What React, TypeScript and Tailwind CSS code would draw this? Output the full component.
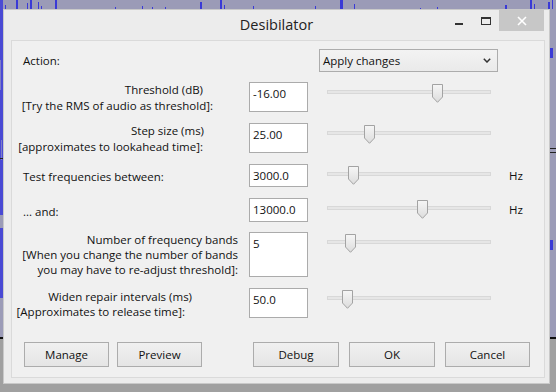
import React from "react";

const font = { fontFamily: '"Open Sans", "Noto Sans", sans-serif' };

// [x, height] of waveform peaks poking above the dialog
const peaks: [number, number, number][] = [
  [5, 4, 1], [16, 9, 2], [27, 6, 1], [30, 9, 2], [38, 7, 1], [41, 3, 1], [55, 9, 2],
  [115, 2, 1], [142, 3, 1], [152, 2, 1], [165, 2, 1], [200, 7, 2], [220, 9, 2],
  [224, 4, 1], [253, 3, 1], [315, 3, 1], [340, 9, 3], [354, 5, 1], [420, 1, 1],
  [437, 2, 1], [505, 4, 2], [530, 9, 2], [534, 5, 1], [548, 7, 2], [552, 9, 1],
];

type Row = {
  lines: [string, number][];
  align: "left" | "right";
  leading: number;
  pt: number;
  value: string;
  h: number;
  mt: number;
  pos: number;
  unit?: string;
};

const rows: Row[] = [
  {
    lines: [["Threshold (dB)", 38], ["[Try the RMS of audio as threshold]:", 28]],
    align: "right", leading: 16, pt: 0, value: "-16.00", h: 30, mt: 10, pos: 105,
  },
  {
    lines: [["Step size (ms)", 37], ["[approximates to lookahead time]:", 38]],
    align: "right", leading: 16, pt: 0, value: "25.00", h: 30, mt: 11, pos: 37,
  },
  {
    lines: [["Test frequencies between:", 0]],
    align: "left", leading: 16, pt: 5, value: "3000.0", h: 23, mt: 11, pos: 21, unit: "Hz",
  },
  {
    lines: [["... and:", 0]],
    align: "left", leading: 16, pt: 6, value: "13000.0", h: 24, mt: 11, pos: 90, unit: "Hz",
  },
  {
    lines: [
      ["Number of frequency bands", 3],
      ["[When you change the number of bands", 3],
      ["you may have to re-adjust threshold]:", 3],
    ],
    align: "right", leading: 15, pt: 0, value: "5", h: 45, mt: 10, pos: 18,
  },
  {
    lines: [["Widen repair intervals (ms)", 49], ["[Approximates to release time]:", 56]],
    align: "right", leading: 15, pt: 1, value: "50.0", h: 30, mt: 11, pos: 15,
  },
];

function Thumb({ left }: { left: number }) {
  return (
    <svg className="absolute top-0" style={{ left }} width="11" height="19" viewBox="0 0 11 19">
      <defs>
        <linearGradient id="thumbFill" x1="0" y1="0" x2="0" y2="1">
          <stop offset="0" stopColor="#f6f6f6" />
          <stop offset="1" stopColor="#dcdcdc" />
        </linearGradient>
      </defs>
      <path d="M0.5 0.5H10.5V13L5.5 18.3L0.5 13Z" fill="url(#thumbFill)" stroke="#a3a3a3" />
    </svg>
  );
}

function Slider({ pos }: { pos: number }) {
  return (
    <div className="relative mt-[2px] h-[19px] w-[164px] shrink-0">
      <div className="absolute left-0 right-0 top-[6px] h-[4px] border border-[#d8d8d8] bg-[#e6e6e6]" />
      <Thumb left={pos} />
    </div>
  );
}

function Button({ label, w, ml }: { label: string; w: string; ml: string }) {
  return (
    <div
      className={`flex h-[25px] items-center justify-center border border-[#acacac] bg-gradient-to-b from-[#f0f0f0] to-[#e5e5e5] text-[11.5px] text-[#111] ${w} ${ml}`}
    >
      {label}
    </div>
  );
}

export default function App() {
  return (
    <div className="relative h-[392px] w-[556px] overflow-hidden bg-[#a0a0a0]" style={font}>
      <svg className="absolute left-0 top-0" width="556" height="339" viewBox="0 0 556 339">
        <rect x="0" y="0" width="556" height="337" fill="#9b9bb7" />
        <rect x="0" y="0" width="3" height="215" fill="#4a4ad4" />
        <rect x="0" y="228" width="3" height="70" fill="#4a4ad4" />
        <rect x="0" y="60" width="1" height="30" fill="#7d7dc8" />
        <rect x="1" y="140" width="1" height="20" fill="#7d7dc8" />
        {peaks.map(([x, h, w]) => (
          <rect key={x} x={x} y={9 - h} width={w} height={h} fill="#3a3ad6" />
        ))}
        <rect x="550" y="48" width="3" height="10" fill="#3a3ad6" />
        <rect x="550" y="240" width="3" height="10" fill="#3a3ad6" />
        <rect x="550" y="148" width="6" height="1" fill="#222" />
        <rect x="550" y="152" width="6" height="1" fill="#222" />
        <rect x="0" y="158" width="3" height="1" fill="#222" />
        <rect x="0" y="337" width="556" height="2" fill="#111" />
      </svg>

      <div className="absolute left-[3px] top-[9px] flex h-[375px] w-[547px] flex-col border border-[#c9c9c9] bg-[#ececec]">
        {/* title bar */}
        <div className="grid h-[30px] shrink-0 grid-cols-[1fr_auto_1fr]">
          <div />
          <div className="self-center text-[14.5px] text-[#222]">Desibilator</div>
          <div className="flex items-start justify-end">
            <div className="mt-[13px] h-[2px] w-[8px] bg-[#333]" />
            <div className="ml-[18px] mt-[7px] h-[8px] w-[10px] border border-t-2 border-[#333]" />
            <div className="ml-[8px] mr-[5px] flex h-[21px] w-[45px] items-center justify-center bg-[#c7c7c7]">
              <svg width="10" height="10" viewBox="0 0 10 10">
                <path d="M1 1L9 9M9 1L1 9" stroke="#fff" strokeWidth="1.6" />
              </svg>
            </div>
          </div>
        </div>

        {/* panel */}
        <div className="ml-[7px] flex h-[338px] w-[534px] flex-col border border-[#dadada] bg-[#f0f0f0] pl-[11px] pt-[8px] text-[11.5px] text-[#111]">
          <div className="flex h-[23px] items-center">
            <div className="w-[296px]">Action:</div>
            <div className="flex h-[23px] w-[179px] items-center justify-between border border-[#acacac] bg-gradient-to-b from-[#f3f3f3] to-[#eaeaea] pl-[3px] pr-[6px]">
              <span>Apply changes</span>
              <svg width="8" height="5" viewBox="0 0 8 5">
                <path d="M0.8 0.8L4 4L7.2 0.8" fill="none" stroke="#333" strokeWidth="1.5" />
              </svg>
            </div>
          </div>

          {rows.map((r) => (
            <div key={r.value} className="flex items-start" style={{ marginTop: r.mt, height: r.h }}>
              <div
                className={`flex w-[218px] shrink-0 flex-col ${r.align === "right" ? "items-end" : "items-start"}`}
                style={{ paddingTop: r.pt, lineHeight: `${r.leading}px` }}
              >
                {r.lines.map(([t, pr]) => (
                  <span key={t} className="whitespace-nowrap" style={{ paddingRight: pr }}>
                    {t}
                  </span>
                ))}
              </div>
              <div
                className="ml-[8px] w-[59px] shrink-0 border border-[#ababab] bg-white pl-[3px] pt-[3px] leading-[16px]"
                style={{ height: r.h }}
              >
                {r.value}
              </div>
              <div className="ml-[19px]">
                <Slider pos={r.pos} />
              </div>
              {r.unit && <div className="ml-[18px] pt-[4px] leading-[16px]">{r.unit}</div>}
            </div>
          ))}

          <div className="ml-[1px] mt-[24px] flex">
            <Button label="Manage" w="w-[85px]" ml="ml-0" />
            <Button label="Preview" w="w-[85px]" ml="ml-[8px]" />
            <Button label="Debug" w="w-[86px]" ml="ml-[51px]" />
            <Button label="OK" w="w-[86px]" ml="ml-[10px]" />
            <Button label="Cancel" w="w-[85px]" ml="ml-[10px]" />
          </div>
        </div>
      </div>
    </div>
  );
}
